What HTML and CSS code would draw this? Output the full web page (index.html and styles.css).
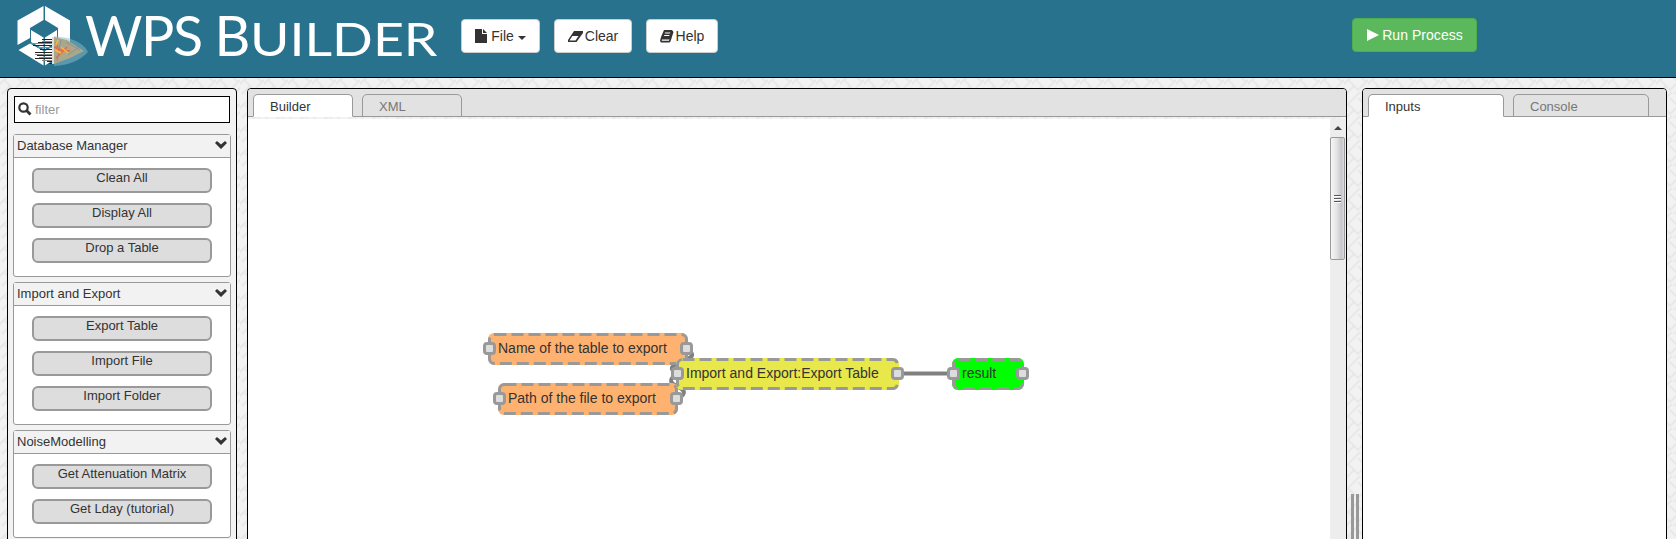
FILE: index.html
```html
<!DOCTYPE html>
<html lang="en">
<head>
<meta charset="utf-8">
<title>WPS Builder</title>
<link rel="stylesheet" href="styles.css">
</head>
<body>
<header class="topbar">
  <svg class="logo" width="440" height="77" viewBox="0 0 440 77" role="img" aria-label="WPS Builder">
    <path fill="#fff" d="M43.500 6 17.500 20.500V45L30 38V28L43.500 20ZM45 6 70 20.500V45L58 38V28L45 20ZM18.500 50 30 43.500 43.500 51V65.500ZM69 50 58 43.500 45 51V65.500ZM31 30 43.500 37.500V49L31 42ZM57 30 45 37.500V49L57 42Z"/>
    <path fill="#8dbccb" opacity=".5" d="M54 36 68 38Q84 43 88 52Q76 65 54 66Z"/>
    <path fill="#aaa78a" d="M54 37 67 40 84 51 70 58 54 64Z"/>
    <path fill="none" stroke="#8f9294" stroke-width="1" d="M66 42 80 50M68 55 79 47M61 40 57 61"/>
    <path fill="none" stroke="#ed664c" stroke-width="1.500" d="M54 47 61 50 70 51M56 58 64 50 67 47M56 42 59 51"/>
    <path fill="none" stroke="#f5bd35" stroke-width="1.500" d="M55 50 61 53M61 47 68 53M58 40 56 45"/>
    <path fill="none" stroke="#222" stroke-width="1" d="M42 39.500H52M38 42.500H52M33 45.500H52M40 49.500H52M35 52.500H52M37 55.500H52M35 58.500H52M47 61.500H52M49 63.500H52"/>
    <path fill="none" stroke="#888" stroke-width="1" d="M42 41.500H52M30 43.500H52M37 47.500H52M35 54.500H52M39 57.500H52M42 60.500H52"/>
    <path fill="#ddd" d="M52 37H54V64H52Z"/>
    <g class="logo-text"><text x="85" y="55.500" font-size="55.500" textLength="118">WPS</text><text x="214.500" y="55.500" font-size="55.500">B</text><text x="250" y="55.500" font-size="46.500" textLength="187.500" lengthAdjust="spacingAndGlyphs">UILDER</text></g>
  </svg>
  <nav class="actions">
    <button class="btn file"><svg width="12" height="14" viewBox="0 0 12 14"><path d="M0 0H7V5H12V14H0ZM8 0 12 4H8Z"/></svg><span>File</span><i class="caret"></i></button>
    <button class="btn clear"><svg width="15" height="11" viewBox="0 0 15 11"><path fill-rule="evenodd" d="M6 0H15V2L8.500 11H0V9ZM4.300 5 1.500 9.500H7.500L10.500 5Z"/></svg><span>Clear</span></button>
    <button class="btn help"><svg width="14" height="13" viewBox="0 0 14 13"><path fill-rule="evenodd" d="M4 0H12L13.500 2 10.500 11.500 9.500 12.500H1L0 11 1 7ZM5 2.500 4.700 3.500H10L10.300 2.500ZM4.300 5 4 6H9.200L9.500 5ZM2 9.500 1.700 10.800H9L9.500 9.500Z"/></svg><span>Help</span></button>
  </nav>
  <button class="btn run"><svg width="12" height="12" viewBox="0 0 12 12"><path d="M0 0 12 6 0 12Z"/></svg><span>Run Process</span></button>
</header>

<main class="workspace">
  <aside class="panel sidebar">
    <label class="filter"><svg width="14" height="14" viewBox="0 0 14 14"><circle cx="5.500" cy="5.500" r="4.200" fill="none" stroke="#333" stroke-width="2.200"/><path d="M8.500 8.500 12.500 12.500" stroke="#333" stroke-width="2.800"/></svg><span>filter</span></label>
    <section class="group">
      <h2>Database Manager<svg width="12" height="8" viewBox="0 0 12 8"><path d="M0 2 2 0 6 3.500 10 0 12 2 6 8Z"/></svg></h2>
      <div class="items"><button>Clean All</button><button>Display All</button><button>Drop a Table</button></div>
    </section>
    <section class="group">
      <h2>Import and Export<svg width="12" height="8" viewBox="0 0 12 8"><path d="M0 2 2 0 6 3.500 10 0 12 2 6 8Z"/></svg></h2>
      <div class="items"><button>Export Table</button><button>Import File</button><button>Import Folder</button></div>
    </section>
    <section class="group">
      <h2>NoiseModelling<svg width="12" height="8" viewBox="0 0 12 8"><path d="M0 2 2 0 6 3.500 10 0 12 2 6 8Z"/></svg></h2>
      <div class="items"><button>Get Attenuation Matrix</button><button>Get Lday (tutorial)</button></div>
    </section>
  </aside>

  <section class="panel builder">
    <div class="tabs"><div class="tab active">Builder</div><div class="tab">XML</div></div>
    <div class="content">
      <div class="canvas">
        <svg class="wires" width="1082" height="421" viewBox="0 0 1082 421"><path d="M438 230C462 242 406 243 430 255"/><path d="M429 280C453 268 406 267 430 255"/><path d="M650 254.500H705"/></svg>
        <div class="node input name"><svg class="outline" width="200" height="32"><rect x="1.500" y="1.500" width="197" height="29" rx="5"/></svg><span>Name of the table to export</span><i class="port in"></i><i class="port out"></i></div>
        <div class="node input path"><svg class="outline" width="180" height="32"><rect x="1.500" y="1.500" width="177" height="29" rx="5"/></svg><span>Path of the file to export</span><i class="port in"></i><i class="port out"></i></div>
        <div class="node process"><svg class="outline" width="223" height="32"><rect x="1.500" y="1.500" width="220" height="29" rx="5"/></svg><span>Import and Export:Export Table</span><i class="port in"></i><i class="port out"></i></div>
        <div class="node result"><svg class="outline" width="72" height="32"><rect x="1.500" y="1.500" width="69" height="29" rx="5"/></svg><span>result</span><i class="port in"></i><i class="port out"></i></div>
      </div>
      <div class="scrollbar"><i class="arrow"></i><div class="thumb"><i></i><i></i><i></i></div></div>
    </div>
  </section>

  <div class="splitter"><i></i><i></i></div>

  <section class="panel side">
    <div class="tabs"><div class="tab active">Inputs</div><div class="tab">Console</div></div>
  </section>
</main>
</body>
</html>
```

FILE: styles.css
```css
* { box-sizing: border-box; }

body {
  margin: 0;
  height: 539px;
  overflow: hidden;
  display: flex;
  flex-direction: column;
  font: 13px/18px "Liberation Sans", Arial, sans-serif;
  color: #333;
  background: #f2f2f2 url("data:image/svg+xml,%3Csvg xmlns='http://www.w3.org/2000/svg' width='24' height='24'%3E%3Cpath d='M-2 14 14-2M2 22 10 14 14 18 26 6M10 26 16 20M4 8 12 16M14 2 22 10M18 22 26 14' fill='none' stroke='%23e8e8e8' stroke-width='2'/%3E%3C/svg%3E");
}

button { font: inherit; color: inherit; }

/* Header */
.topbar {
  flex: none;
  display: flex;
  align-items: flex-start;
  height: 78px;
  background: #28728e;
  border-bottom: 1px solid #000;
}
.logo { flex: none; display: block; }
.logo-text { font-family: Lato, sans-serif; fill: #fff; }
.actions { display: flex; gap: 14px; margin: 19px 0 0 21px; }
.btn {
  display: flex;
  align-items: center;
  justify-content: center;
  height: 34px;
  padding: 0;
  border: 1px solid #ccc;
  border-radius: 4px;
  background: #fff;
  font-size: 14px;
}
.btn svg { fill: #333; }
.file { width: 79px; }
.file svg { margin-right: 4px; }
.clear { width: 78px; }
.clear svg { margin-right: 2px; }
.help { width: 72px; }
.help svg { margin-right: 2px; }
.caret {
  margin: 3px 0 0 4px;
  border: 4px solid transparent;
  border-top-color: #333;
  border-bottom: 0;
}
.run {
  width: 125px;
  margin: 18px 199px 0 auto;
  padding-left: 1px;
  background: #5cb85c;
  border-color: #4cae4c;
  color: #fff;
}
.run svg { fill: #fff; margin-right: 3px; }
.run span { letter-spacing: 0.05px; }

/* Panels */
.workspace { flex: 1; min-height: 0; display: flex; padding: 10px 9px 0 7px; }
.panel {
  height: 460px;
  border: 1px solid #000;
  border-radius: 4px 4px 0 0;
  overflow: hidden;
}
.sidebar {
  width: 230px;
  margin-right: 10px;
  padding: 7px 5px 0;
  background: #f2f2f2;
}
.builder { width: 1100px; display: flex; flex-direction: column; }
.side { width: 305px; background: #fff; }

.filter {
  display: flex;
  align-items: center;
  height: 27px;
  margin: 0 1px 11px;
  padding-left: 3px;
  border: 1px solid #000;
  background: #fff;
  color: #999;
}
.filter svg { margin: -2px 3px 0 0; }

.group {
  margin-bottom: 5px;
  border: 1px solid #999;
  border-radius: 3px;
  background: #fff;
}
.group h2 {
  display: flex;
  justify-content: space-between;
  height: 23px;
  margin: 0;
  padding: 1px 3px 0;
  border-bottom: 1px solid #999;
  background: #f2f2f2;
  font: inherit;
  line-height: 20px;
}
.group h2 svg { fill: #333; margin-top: 5px; }
.items {
  display: flex;
  flex-direction: column;
  align-items: center;
  gap: 10px;
  padding: 10px 0 13px;
}
.items button {
  width: 180px;
  height: 25px;
  padding: 0 0 5px;
  border: 2px solid #999;
  border-radius: 6px;
  background: #ddd;
  line-height: 16px;
}

/* Tabs */
.tabs {
  flex: none;
  display: flex;
  align-items: flex-end;
  gap: 9px;
  height: 28px;
  padding-left: 5px;
  background: #e2e2e2;
  box-shadow: inset 0 -1px #999;
}
.tab {
  width: 100px;
  height: 23px;
  padding: 3px 16px 0;
  border: 1px solid #999;
  border-radius: 5px 5px 0 0;
  color: #777;
}
.tab.active { background: #fff; border-bottom-color: #fff; color: #333; }
.side .tab { width: 136px; }

/* Builder canvas */
.content { flex: 1; display: flex; margin-top: 2px; background: #fff; }
.canvas { position: relative; flex: 1; overflow: hidden; }
.wires { position: absolute; left: 0; top: 0; fill: none; stroke: #808080; stroke-width: 4; }
.node {
  position: absolute;
  height: 32px;
  padding: 6px 10px;
  border-radius: 6px;
  font-size: 14px;
  line-height: 18px;
  white-space: nowrap;
}
.node span { position: relative; }
.outline { position: absolute; left: 0; top: 0; }
.outline rect { fill: none; stroke: #999; stroke-width: 3; stroke-dasharray: 12 5; }
.input { background: #ffb26f; }
.name { left: 240px; top: 214px; width: 200px; }
.path { left: 250px; top: 264px; width: 180px; }
.process { left: 428px; top: 239px; width: 223px; background: #e8e84a; }
.result { left: 704px; top: 239px; width: 72px; background: #0f0; }
.port {
  position: absolute;
  top: 9px;
  width: 13px;
  height: 13px;
  border: 3px solid #999;
  border-radius: 4px;
  background: #ddd;
}
.in { left: -5px; }
.out { right: -5px; }

.scrollbar {
  width: 16px;
  display: flex;
  flex-direction: column;
  align-items: flex-start;
  background: #ededed;
}
.arrow {
  margin: 7px 0 7px 4px;
  border: 4px solid transparent;
  border-bottom: 4px solid #444;
  border-top: 0;
}
.thumb {
  width: 15px;
  height: 123px;
  display: flex;
  flex-direction: column;
  align-items: center;
  justify-content: center;
  gap: 1px;
  border: 1px solid #999;
  border-radius: 2px;
  background: linear-gradient(90deg, #f6f6f6, #e3e3e6 45%, #c5c5ca 80%, #ddd);
}
.thumb i { width: 7px; height: 2px; background: #555; border-bottom: 1px solid #fff; }

.splitter {
  width: 15px;
  display: flex;
  justify-content: center;
  gap: 2px;
  padding-top: 406px;
}
.splitter i { width: 3px; background: #999; }
```
